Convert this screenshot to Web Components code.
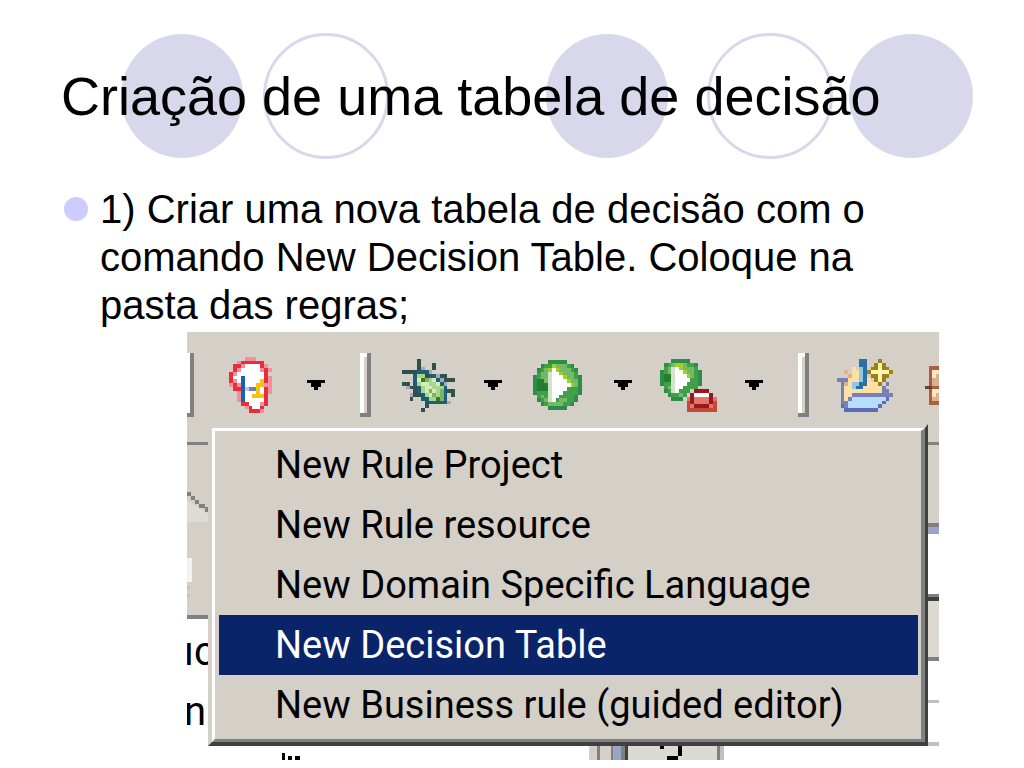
<!DOCTYPE html>
<html lang="pt">
<head>
<meta charset="utf-8">
<title>Criação de uma tabela de decisão</title>
<style>
  body { margin: 0; background: #fff; color: #000; font-family: "Liberation Sans", Arial, sans-serif; }
</style>
</head>
<body>
<lesson-slide>
  <slide-header slot="header">Criação de uma tabela de decisão</slide-header>
  <bullet-item>1) Criar uma nova tabela de decisão com o comando New Decision Table. Coloque na pasta das regras;</bullet-item>
  <ide-window slot="figure"></ide-window>
</lesson-slide>

<script>
class BaseElement extends HTMLElement {
  connectedCallback() {
    if (this.shadowRoot) return;
    this.attachShadow({ mode: 'open' }).innerHTML = this.render();
  }
}

customElements.define('lesson-slide', class extends BaseElement {
  render() {
    return `<style>
      :host { display: flex; flex-direction: column; padding: 33px 0 8px; }
      .body { padding: 26px 70px 3px 64px; }
      .figure { padding: 0 85px 0 187px; }
    </style>
    <slot name="header"></slot>
    <main class="body"><slot></slot></main>
    <div class="figure"><slot name="figure"></slot></div>`;
  }
});

customElements.define('slide-header', class extends BaseElement {
  render() {
    return `<style>
      :host { display: grid; align-items: center; }
      svg, h1 { grid-area: 1 / 1; }
      svg { display: block; width: 100%; }
      h1 { margin: 0; padding-left: 61px; font-size: 54px; line-height: 64px; font-weight: 400; position: relative; }
    </style>
    <svg viewBox="0 0 1024 126" fill="#d9d7eb" aria-hidden="true">
      <ellipse cx="182" cy="63" rx="61" ry="62"/>
      <ellipse cx="607" cy="63" rx="61" ry="62"/>
      <ellipse cx="911" cy="63" rx="62" ry="62"/>
      <g fill="none" stroke="#d9d7eb" stroke-width="3">
        <circle cx="326" cy="63" r="61.5"/><circle cx="770" cy="63" r="61.5"/>
      </g>
    </svg>
    <h1><slot></slot></h1>`;
  }
});

customElements.define('bullet-item', class extends BaseElement {
  render() {
    return `<style>
      :host { display: flex; gap: 12px; font-size: 40px; line-height: 48px; }
      .dot { flex: none; width: 24px; height: 24px; margin-top: 12px; border-radius: 50%; background: #ccccff; }
      p { margin: 0; }
    </style>
    <span class="dot"></span><p><slot></slot></p>`;
  }
});

const PALETTE = {
  k: '#000000', w: '#ffffff', r: '#e62e3c', p: '#f0909a', b: '#1464b4', y: '#f8c010', v: '#7c78b0', l: '#c8c8e0',
  d: '#30504c', t: '#1c6078', a: '#a4a8b8', g: '#a8d48c', h: '#d4ecb8', m: '#78b464', e: '#407820',
  G: '#2c8c48', F: '#40a048', M: '#74b868', L: '#a0d028', D: '#287c30', C: '#d0e4c8',
  R: '#c84838', S: '#e07868', T: '#981820', O: '#9c8010', Y: '#fff4b0',
  c: '#fce0a8', B: '#2c70a8', A: '#90c8e0', P: '#7880b8', U: '#b8dcfc', N: '#5c6cb8',
  n: '#a86040', o: '#e0b088', q: '#f8e8c8', x: '#703838'
};
const ICONS = {
  arrow: ['kkkkk', '.kkk.', '..k..'],
  drools: [
    '....ppp....',
    '..prrrrrr..',
    '.rrpwwwwrp.',
    '.rpwwwwwprp',
    'rpwwwwwwwr.',
    'rwwbwwwwwrp',
    'rpwbwwwwyrp',
    'prpbwwwyypp',
    '.rrblvvywrp',
    '..pbwwwywrp',
    '..pbwwyyyr.',
    '..pbwwwwwr.',
    '...rrwwwpr.',
    '....prwwr..',
    '.....rrrp..'],
  debug: [
    '....d.........',
    '....d...d.....',
    '....da..d.....',
    'ddddttta......',
    '...tggdttadd..',
    '...themghtaddd',
    'dd.tghhgghta..',
    '.addtghhgggt..',
    '...dtghmhgmtdd',
    '..addtghmgmt.d',
    '..d..ttggemt..',
    '......dttttta.',
    '......d.......',
    '.....d........'],
  run: [
    '....GGGGG....',
    '..GFFLMMMFG..',
    '.GFMLwLMMMFG.',
    '.FMMCwwLMMMF.',
    'GFMMCwwwLMMFG',
    'GDDMCwwwwLMMG',
    'GDDDCwwwwwLMG',
    'GDDDCwwwwFFFG',
    'GFFFCwwwFFFFG',
    '.FMFCwwFFFFG.',
    '.GFMCwFMMFFG.',
    '..GFMMMMFFG..',
    '....GGGGG....'],
  tools: [
    '...GGGGG.......',
    '.GFMLLMFFG.....',
    '.FMCwLMMMF.....',
    'GFMCwwLMMFG....',
    'GDDCwwwLMFG....',
    'GDDCwwwwFFG....',
    'GFFCwwwFFFG....',
    '.FMCwwFFFF.....',
    '.GFCwFFF.TTTT..',
    '..GFFMF.TwwwwT.',
    '...GGG.STSSSSTS',
    '.......RTSSSSTR',
    '.......RSTTTTSR',
    '.......RRRRRRRR'],
  folder: [
    '......BB...O...',
    '......BB..OYO..',
    '....c.AB.OOYOO.',
    '..o.ccABOYYYYYO',
    '...occAB.OOYOO.',
    'PPPcccABc.OYO..',
    '.PocAABBcccO.P.',
    '.PccABBcccccP..',
    '.PccccccccccPP.',
    '.PccPPPPPPPPPPP',
    '.PcPUUUUUUUUUN.',
    '.PPUUUUUUUUUN..',
    '.NPUUUUUUUUN...',
    '..NNNNNNNNN....'],
  grid: [
    '.nnn',
    '.nqq',
    '.nqo',
    '.noo',
    '.noo',
    'xxnn',
    '.nqq',
    '.nqo',
    '.noo',
    '.nnn']
};

customElements.define('pixel-icon', class extends BaseElement {
  render() {
    const rows = ICONS[this.getAttribute('name')];
    let cells = '';
    rows.forEach((row, y) => {
      for (let x = 0; x < row.length;) {
        let end = x + 1;
        while (row[end] === row[x]) end++;
        if (row[x] !== '.') cells += `<rect x="${x}" y="${y}" width="${end - x}" height="1" fill="${PALETTE[row[x]]}"/>`;
        x = end;
      }
    });
    return `<style>:host { display: block; } svg { display: block; width: 100%; height: 100%; }</style>
      <svg viewBox="0 0 ${rows[0].length} ${rows.length}" preserveAspectRatio="none" shape-rendering="crispEdges" aria-hidden="true">${cells}</svg>`;
  }
});

customElements.define('tool-bar', class extends BaseElement {
  render() {
    const tool = (name, label, w, h) =>
      `<button type="button" aria-label="${label}"><pixel-icon name="${name}" style="width:${w}px;height:${h}px"></pixel-icon></button>`;
    const arrow = label => tool('arrow', label, 18, 10);
    const sep = '<span class="sep"></span>';
    return `<style>
      :host { display: grid; grid-template-columns: 42px 78px 53px 42px 82px 49px 81px 46px 85px 53px 39px 88px 14px;
        align-items: center; padding: 21px 0 7px; background: #d4d0c8; overflow: hidden; }
      button { border: 0; padding: 0; background: none; justify-self: start; }
      .sep { width: 11px; height: 64px;
        background: linear-gradient(#808080, #808080) bottom / 100% 4px no-repeat,
          linear-gradient(#808080, #808080) right / 4px 100% no-repeat,
          linear-gradient(#fff, #fff) left / 4px 100% no-repeat,
          linear-gradient(#fff, #fff) top left / 7px 4px no-repeat; }
      .sep:first-of-type { width: 7px; }
    </style>
    ${sep}${tool('drools', 'Rules', 43, 56)}${arrow('Rules menu')}
    ${sep}${tool('debug', 'Debug', 53, 53)}${arrow('Debug menu')}
    ${tool('run', 'Run', 49, 50)}${arrow('Run menu')}
    ${tool('tools', 'External tools', 57, 53)}${arrow('External tools menu')}
    ${sep}${tool('folder', 'New Java project', 56, 53)}${tool('grid', 'New package', 14, 39)}`;
  }
});

customElements.define('menu-item', class extends BaseElement {
  render() {
    return `<style>
      :host { display: block; }
      button { display: block; width: 100%; height: 60px; border: 0; padding: 0 0 0 56px; background: none; text-align: left;
        color: #000; font: 38px/60px Roboto, "Liberation Sans", sans-serif; white-space: nowrap; }
      :host([selected]) button { background: #0a246a; color: #fff; }
    </style>
    <button type="button" role="menuitem"><slot></slot></button>`;
  }
});

customElements.define('popup-menu', class extends BaseElement {
  render() {
    return `<style>
      :host { display: block; background: #d4d0c8; border: solid; border-width: 4px 3px 4px 4px;
        border-color: #d4d0c8 #404040 #404040 #d4d0c8; }
      .inner { border: solid; border-width: 3px 4px 3px 3px; border-color: #fff #808080 #808080 #fff; padding: 4px 3px 4px 4px; }
    </style>
    <div class="inner" role="menu"><slot></slot></div>`;
  }
});

customElements.define('ide-window', class extends BaseElement {
  render() {
    return `<style>
      :host { display: block; }
      .row { display: grid; grid-template-columns: 21px minmax(0, 1fr) 11px; }
      svg { display: block; overflow: hidden; }
      text { font: 40px Roboto, "Liberation Sans", sans-serif; }
    </style>
    <tool-bar></tool-bar>
    <div class="row">
      <svg width="21" height="322" viewBox="0 0 21 322">
        <path fill="#d4d0c8" d="M0 0h21v191H0z"/>
        <path fill="#808080" d="M0 18h21v3H0zM0 191h21v4H0z"/>
        <path fill="#dedbd5" d="M0 76l21 14v8H0z"/>
        <path fill="#808080" d="M0 68h4v4h4v4h4v4h6v3h3v5h-3v-4h-6v-4H8v-4H4v-4H0z"/>
        <path fill="#f4f2ee" d="M0 134h5v24H0z"/><path fill="#c4c0bc" d="M0 162h3v3H0zM0 170h3v3H0z"/>
        <text x="-3" y="241">ıc</text><text x="-3" y="301">n</text>
      </svg>
      <popup-menu>
        <menu-item>New Rule Project</menu-item>
        <menu-item>New Rule resource</menu-item>
        <menu-item>New Domain Specific Language</menu-item>
        <menu-item selected>New Decision Table</menu-item>
        <menu-item>New Business rule (guided editor)</menu-item>
      </popup-menu>
      <svg width="11" height="322" viewBox="0 0 11 322">
        <path fill="#d4d0c8" d="M0 0h11v99H0z"/><path fill="#dcd9d2" d="M0 177h11v56H0z"/>
        <path fill="#808080" d="M0 18h11v3H0zM0 99h11v4H0zM0 170h11v3H0zM0 233h11v4H0z"/>
        <path fill="#98a4c8" d="M0 103h11v7H0z"/><path fill="#404040" d="M0 173h11v4H0z"/>
        <path fill="#c0c0c0" d="M0 276h11v3H0zM0 318h11v4H0z"/>
      </svg>
    </div>
    <svg width="752" height="14" viewBox="0 0 752 14">
      <path d="M95 7h3v7h-3zM101 10h4v4h-4zM108 10h5v4h-5z"/>
      <path fill="#d4d0c8" d="M402 0h135v14H402z"/><path fill="#dcd9d2" d="M441 0h89v14h-89z"/>
      <path fill="#808080" d="M410 0h3v14h-3zM424 0h3v14h-3zM434 0h4v14h-4zM530 0h3v14h-3z"/>
      <path fill="#98a4c8" d="M426 0h8v14h-8z"/><path fill="#404040" d="M438 0h3v14h-3z"/>
      <path fill="#c0c0c0" d="M533 0h4v14h-4z"/>
      <path d="M473 0h4v3h-4zM491 0h4v10h-4zM480 10h11v4h-11z"/>
    </svg>`;
  }
});
</script>
</body>
</html>
